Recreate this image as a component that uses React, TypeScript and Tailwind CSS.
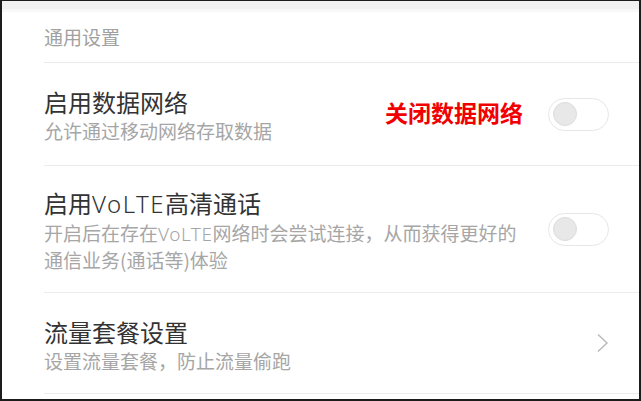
import React from "react";

const font = { fontFamily: '"Noto Sans CJK SC", "Noto Sans", sans-serif' };

function Toggle() {
  return (
    <div className="relative flex h-[33px] w-[61px] shrink-0 items-center rounded-full border-[1.5px] border-[#e6e6e6] bg-white">
      <div className="ml-[4px] h-[24px] w-[24px] rounded-full border border-[#dcdcdc] bg-[#e8e8e8]" />
    </div>
  );
}

function Chevron() {
  return (
    <svg width="13" height="20" viewBox="0 0 13 20" className="shrink-0">
      <path d="M2 1.5 L11 10 L2 18.5" fill="none" stroke="#b8b8b8" strokeWidth="1.4" />
    </svg>
  );
}

export default function App() {
  return (
    <div
      className="flex h-[401px] w-[641px] flex-col overflow-hidden border-t border-l-2 border-r-2 border-b-2 border-[#1c1c1c] bg-white"
      style={font}
    >
      <div className="h-[8px] shrink-0 bg-[#f1f1f1]" />
      <div className="h-[3px] shrink-0 bg-[#f8f8f8]" />
      <div className="flex flex-1 flex-col pl-[42px]">
        <div className="flex h-[51px] shrink-0 items-center border-b border-[#ececec] text-[19px] text-[#a0a0a0]">
          通用设置
        </div>

        <div className="flex h-[103px] shrink-0 items-center border-b border-[#ececec] pr-[30px]">
          <div className="flex flex-1 flex-col pt-[2px]">
            <div className="text-[24px] leading-[30px] text-[#333333]">启用数据网络</div>
            <div className="mt-[1px] text-[19px] leading-[25px] text-[#a6a6a6]">允许通过移动网络存取数据</div>
          </div>
          <div className="mb-[4px] mr-[25px] text-[23px] font-bold leading-[30px] text-[#f00000]">关闭数据网络</div>
          <Toggle />
        </div>

        <div className="flex h-[127px] shrink-0 items-center border-b border-[#ececec] pr-[30px]">
          <div className="flex flex-1 flex-col pt-[1px]">
            <div className="text-[24px] leading-[30px] text-[#333333]">
              启用<span className="font-['Noto_Sans'] font-light tracking-[1.5px]">VoLTE</span>高清通话
            </div>
            <div className="mt-[1px] text-[19px] leading-[25px] text-[#a6a6a6]">
              开启后在存在<span className="font-['Noto_Sans'] font-light tracking-[0.5px]">VoLTE</span>网络时会尝试连接，从而获得更好的
              <br />
              通信业务(通话等)体验
            </div>
          </div>
          <Toggle />
        </div>

        <div className="flex h-[101px] shrink-0 items-center border-b border-[#ececec] pr-[30px]">
          <div className="flex flex-1 flex-col pt-[3px]">
            <div className="text-[24px] leading-[30px] text-[#333333]">流量套餐设置</div>
            <div className="mt-[1px] text-[19px] leading-[25px] text-[#a6a6a6]">设置流量套餐，防止流量偷跑</div>
          </div>
          <Chevron />
        </div>
      </div>
    </div>
  );
}
